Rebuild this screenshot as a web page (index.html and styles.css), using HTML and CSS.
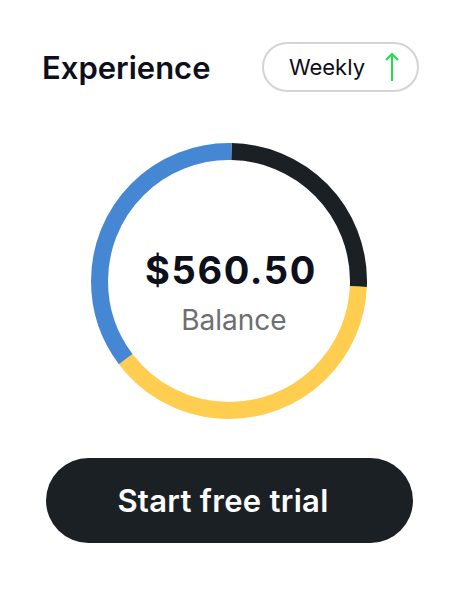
FILE: index.html
```html
<!DOCTYPE html>
<html lang="en">
<head>
    <meta charset="UTF-8">
    <meta name="viewport" content="width=device-width, initial-scale=1.0">
    <title>Experience</title>
    <link rel="stylesheet" href="styles.css">
</head>
<body>
    <div class="card">
        <div class="header">
            <h2 class="title">Experience</h2>
            <button class="period">
                <span>Weekly</span>
                <svg class="arrow" width="14" height="30" viewBox="0 0 14 30">
                    <path d="M7 29 V2 M1 8 L7 2 L13 8" fill="none" stroke="#1fe04a" stroke-width="2"/>
                </svg>
            </button>
        </div>

        <div class="ring">
            <svg class="ring-chart" width="276" height="276" viewBox="0 0 276 276">
                <g transform="rotate(-90 138 138)" fill="none" stroke-width="17">
                    <circle cx="138" cy="138" r="129.5" pathLength="100" stroke="#1b2025" stroke-dasharray="25.4 74.6" stroke-dashoffset="-0.3"/>
                    <circle cx="138" cy="138" r="129.5" pathLength="100" stroke="#ffcd4f" stroke-dasharray="39 61" stroke-dashoffset="-25.7"/>
                    <circle cx="138" cy="138" r="129.5" pathLength="100" stroke="#4687d4" stroke-dasharray="35.6 64.4" stroke-dashoffset="-64.7"/>
                </g>
            </svg>
            <div class="ring-label">
                <div class="amount">$560.50</div>
                <div class="caption">Balance</div>
            </div>
        </div>

        <button class="trial">Start free trial</button>
    </div>
</body>
</html>
```

FILE: styles.css
```css
body {
    margin: 0;
    font-family: Inter, "Noto Sans", sans-serif;
    background: #ffffff;
    color: #0d0f1a;
}
.card {
    display: flex;
    flex-direction: column;
    align-items: center;
    padding: 42px 0 0 0;
}
.header {
    align-self: stretch;
    display: flex;
    justify-content: space-between;
    align-items: center;
    padding: 0 39px 0 42px;
}
.title {
    margin: 0;
    font-size: 31px;
    font-weight: 600;
    letter-spacing: 0;
}
.period {
    display: flex;
    align-items: center;
    gap: 20px;
    height: 50px;
    padding: 0 18px 0 25px;
    border: 2px solid #d4d4d4;
    border-radius: 25px;
    background: #fff;
    font-family: inherit;
    font-size: 22px;
    font-weight: 400;
    color: #0d0f1a;
}
.arrow {
    display: block;
}
.ring {
    display: grid;
    justify-items: center;
    margin-top: 51px;
}
.ring-chart,
.ring-label {
    grid-area: 1 / 1;
}
.ring-chart {
    display: block;
}
.ring-label {
    align-self: start;
    text-align: center;
    padding-top: 104px;
}
.amount {
    padding-left: 4px;
    font-size: 38px;
    font-weight: 700;
    letter-spacing: 1.6px;
    line-height: 46px;
}
.caption {
    margin-top: 10px;
    padding-left: 10px;
    font-size: 28px;
    color: #6e6e6e;
    line-height: 34px;
}
.trial {
    margin-top: 39px;
    width: 367px;
    height: 85px;
    padding: 0 12px 0 0;
    border: none;
    border-radius: 43px;
    background: #1b2025;
    color: #fff;
    font-family: inherit;
    font-size: 31px;
    font-weight: 600;
    letter-spacing: 0.3px;
}
```
